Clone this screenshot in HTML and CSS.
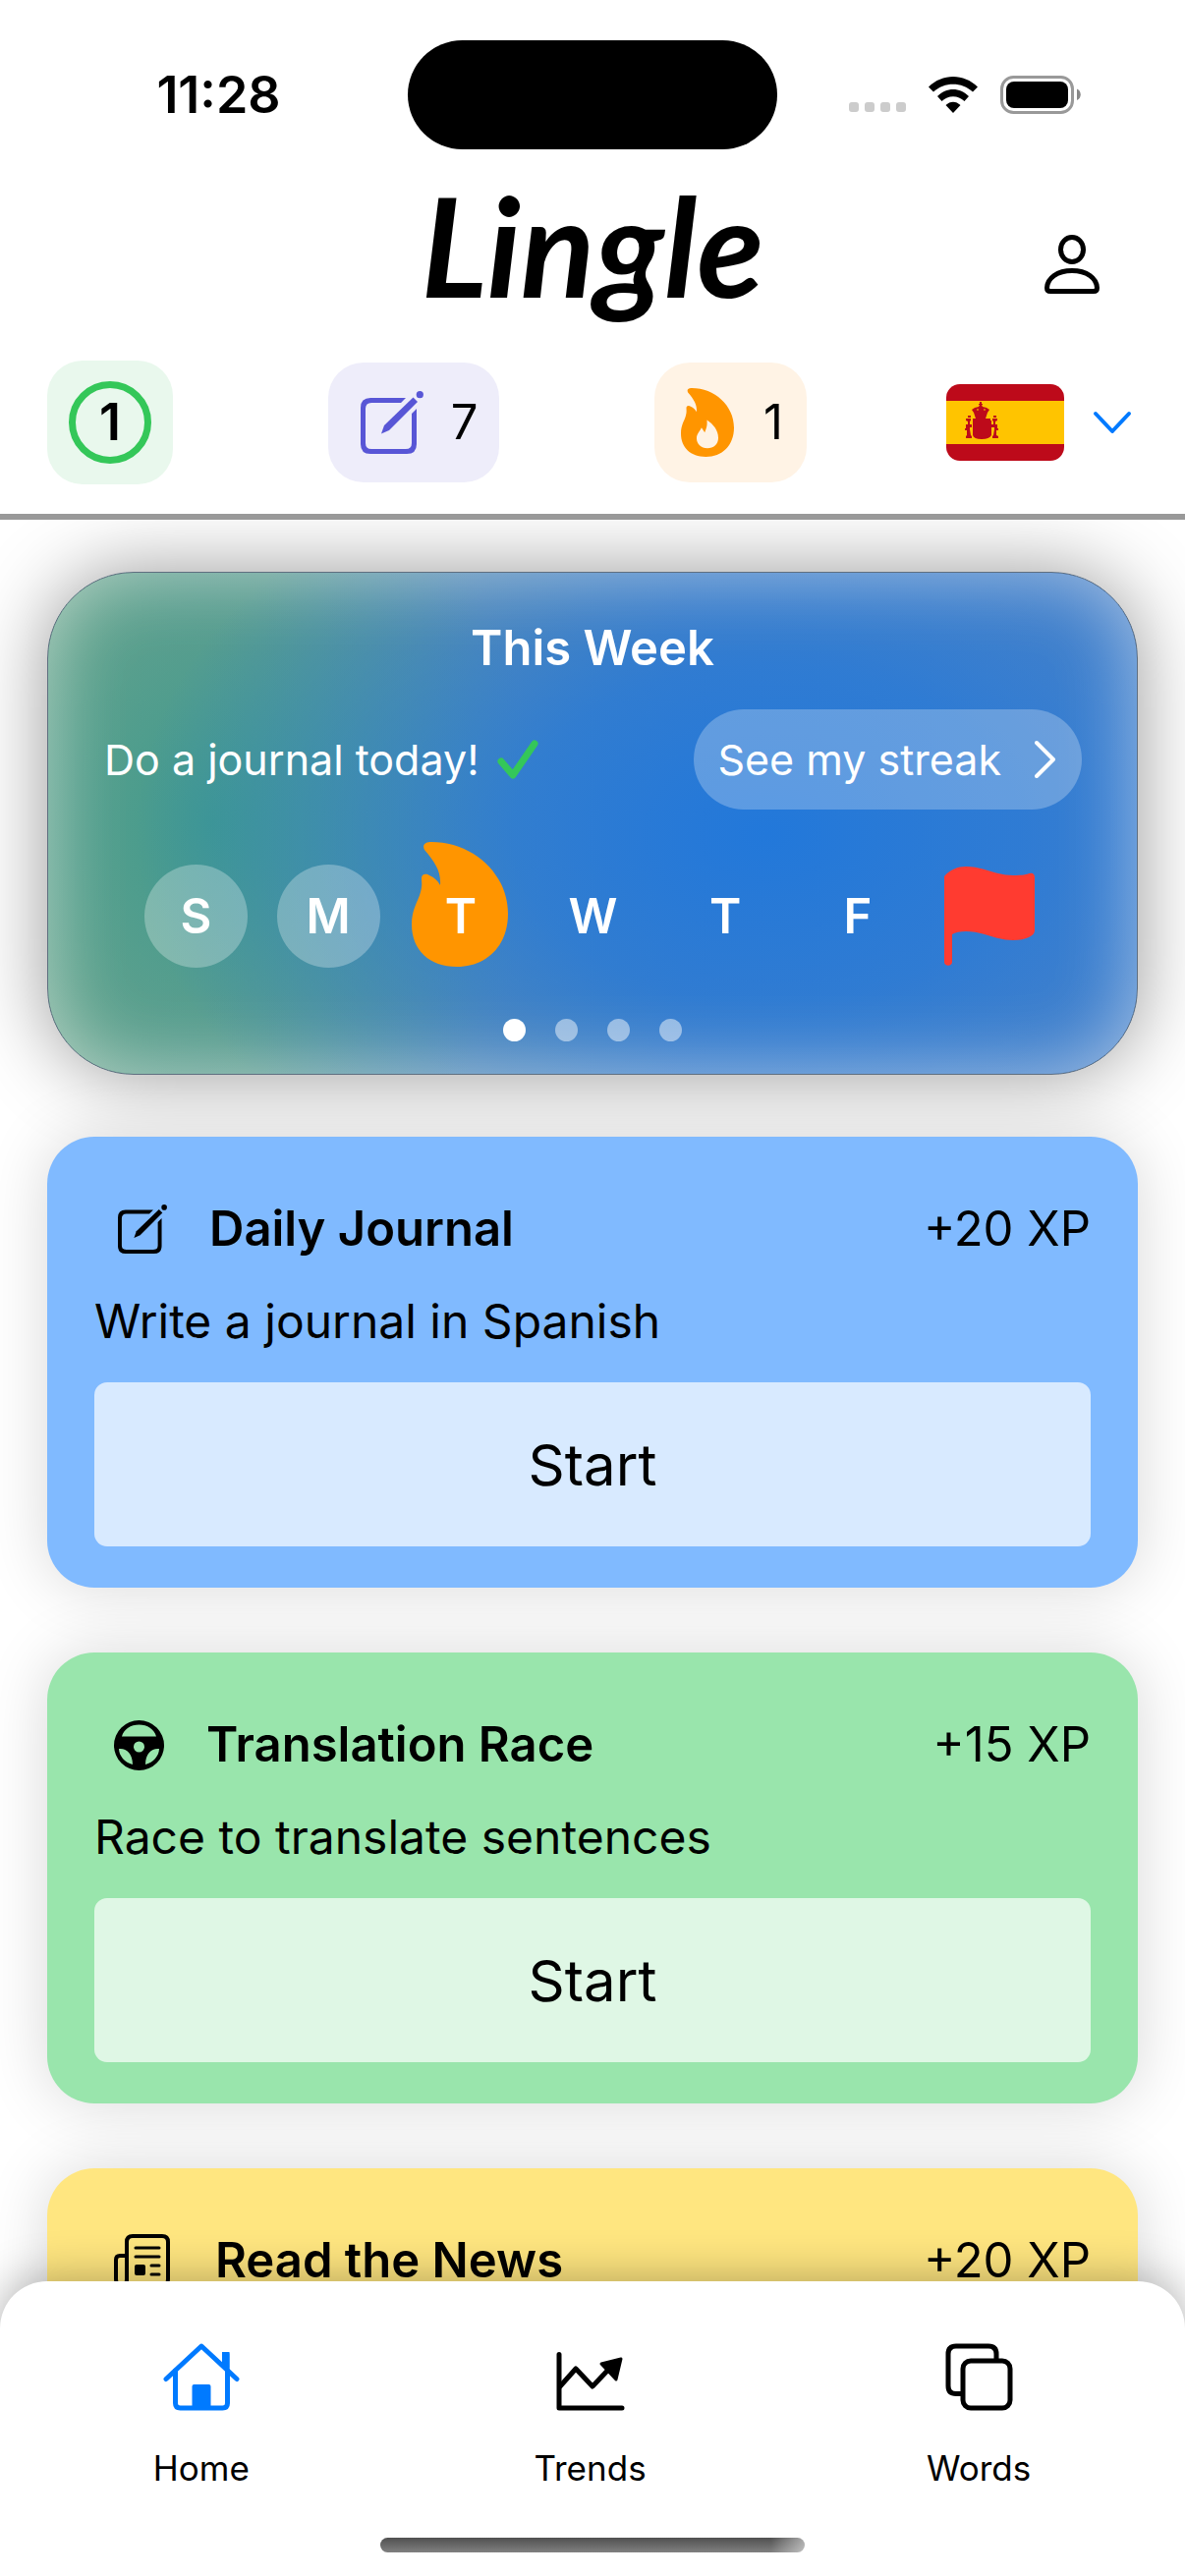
FILE: index.html
```html
<!DOCTYPE html>
<html lang="en">
<head>
<meta charset="utf-8">
<meta name="viewport" content="width=device-width, initial-scale=1">
<title>Lingle</title>
<link rel="stylesheet" href="styles.css">
</head>
<body>
<svg class="sprite" aria-hidden="true">
  <symbol id="compose" viewBox="0 0 64 64">
    <path d="M41 12H11q-6 0-6 6v35q0 6 6 6h35q6 0 6-6V23l5-5V54q0 10-10 10H10Q0 64 0 54V17Q0 7 10 7H46z" fill="currentColor"/>
    <path d="M53.500 6.500l4.500 4.500L29 40l-8 3.500 3-8.500z" fill="currentColor"/>
    <circle cx="60.300" cy="3.700" r="3.600" fill="currentColor"/>
  </symbol>
</svg>

<header class="top">
  <div class="status">
    <time class="status-time">11:28</time>
    <div class="island"></div>
    <div class="status-icons">
      <svg width="58" height="10" viewBox="0 0 58 10" fill="#ccc" class="cell"><rect width="10" height="10" rx="3"/><rect x="16" width="10" height="10" rx="3"/><rect x="32" width="10" height="10" rx="3"/><rect x="48" width="10" height="10" rx="3"/></svg>
      <svg width="50" height="37" viewBox="0 0 50 37"><path d="M0 10.500C14-3.500 36-3.500 50 10.500L45 15.500C34 5 16 5 5 15.500zM9 20C18 10.500 32 10.500 41 20L36.500 25C30 18.500 20 18.500 13.500 25zM17.500 29C22 24.500 28 24.500 32.500 29L25 37z"/></svg>
      <svg width="82" height="39" viewBox="0 0 82 39"><rect x="1.500" y="1.500" width="72" height="36" rx="12" fill="none" stroke="#999" stroke-width="3"/><rect x="6" y="6" width="63" height="27" rx="8"/><path d="M78 13.500c5 2 5 9.500 0 11.500z" fill="#888"/></svg>
    </div>
  </div>
  <div class="brand">
    <h1 class="wordmark">Lingle</h1>
    <button class="profile" aria-label="Profile">
      <svg width="56" height="60" viewBox="0 0 56 60" fill="none" stroke="#000" stroke-width="5"><ellipse cx="28" cy="15" rx="11.500" ry="12.500"/><path d="M2.500 54C3 44 13 36.500 28 36.500S53 44 53.500 54Q53.500 57.500 50 57.500H6Q2.500 57.500 2.500 54z"/></svg>
    </button>
  </div>
  <div class="stats">
    <div class="chips">
      <div class="chip chip-level"><span class="ring">1</span></div>
      <div class="chip chip-journal"><svg width="64" height="64"><use href="#compose"/></svg><span>7</span></div>
      <div class="chip chip-streak">
        <svg width="54" height="70" viewBox="0 0 98 127"><path fill="#ff9500" fill-rule="evenodd" d="M13 8C10 2 15 0 20 0C62 0 98 32 98 73C98 106 76 127 46 127C18 127 0 110 0 84C0 68 6 62 9 51C11 44 10 40 10 37C10 32 15 32 18 34C23 36 26 39 29 44C30 30 24 21 13 8zM48 59C60 67 69 78 69 92C69 104 60 111 49 111C37 111 29 103 29 93C29 84 34 82 38 73L44 82C47 74 49 70 48 59z"/></svg>
        <span>1</span>
      </div>
    </div>
    <button class="language" aria-label="Change language, Spanish">
      <svg class="flag" width="120" height="78" viewBox="0 0 120 78"><path fill="#bd0a1a" d="M0 0h120v78H0z"/><path fill="#ffc400" d="M0 17h120v44H0z"/><g fill="#bd0a1a"><path d="M27 35h18v2h1v15q-2 4-10 4t-9-4zM28 29l-2-3 3-2 4-1 1-2h-1v-1h1v-2h2v2h1v1h-1l1 2 4 1 3 2-2 3-2 6H30z"/><path d="M20 35h5v2l-1 1v3h2v3h-2v2l1 6 1 1v2h-6v-2l1-1v-5h-2v-2h1v-4h2v-3l-2-1zM47 35h5v2l-2 1v3h2v4h1v2h-2v5l2 1v2h-6v-2l1-1 1-6v-2h-3v-3h2v-3l-1-1zM22 32h3v2h-3zM48 32h3v2h-3z"/></g><path d="M31 26h2M38 26h2" stroke="#ffc400" fill="none"/></svg>
      <svg width="40" height="24" viewBox="0 0 40 24" fill="none" stroke="#007aff" stroke-width="4" stroke-linecap="round" stroke-linejoin="round"><path d="M3 3l17 18L37 3"/></svg>
    </button>
  </div>
</header>

<main class="feed">
  <section class="week">
    <h2 class="week-title">This Week</h2>
    <div class="week-row">
      <p class="week-note">Do a journal today! <svg width="42" height="40" viewBox="0 0 42 40" fill="none" stroke="#34c759" stroke-width="7" stroke-linecap="round" stroke-linejoin="round"><path d="M4 22l12 14L38 4"/></svg></p>
      <button class="streak-btn">See my streak <svg width="22" height="40" viewBox="0 0 22 40" fill="none" stroke="#fff" stroke-width="4" stroke-linecap="round" stroke-linejoin="round"><path d="M2 3l17 17L2 37"/></svg></button>
    </div>
    <ul class="days">
      <li class="day day-past">S</li>
      <li class="day day-past">M</li>
      <li class="day"><svg class="flame" width="98" height="127" viewBox="0 0 98 127"><path fill="#ff9500" d="M13 8C10 2 15 0 20 0C62 0 98 32 98 73C98 106 76 127 46 127C18 127 0 110 0 84C0 68 6 62 9 51C11 44 10 40 10 37C10 32 15 32 18 34C23 36 26 39 29 44C30 30 24 21 13 8z"/></svg><span class="day-name">T</span></li>
      <li class="day">W</li>
      <li class="day">T</li>
      <li class="day">F</li>
      <li class="day"><svg width="92" height="101" viewBox="0 0 92 101" role="img" aria-label="Goal"><path fill="#ff3b30" d="M0 10C6 3 14 0 22 0C40 0 52 9 70 9C80 9 84 8 87 7C90 6 92 8 92 11V65C92 68 90 70 86 72C82 74 77 75 70 75C52 75 40 66 22 66C16 66 11 67 8 69V97C8 102 0 102 0 97z"/></svg></li>
    </ul>
    <div class="pager"><i class="dot dot-on"></i><i class="dot"></i><i class="dot"></i><i class="dot"></i></div>
  </section>

  <article class="card card-blue">
    <div class="card-head">
      <svg class="card-icon" width="54" height="50" viewBox="-4 0 54 50"><use href="#compose" width="50" height="50"/></svg>
      <h2 class="card-title">Daily Journal</h2><span class="xp">+20 XP</span>
    </div>
    <p class="card-text">Write a journal in Spanish</p>
    <button class="start">Start</button>
  </article>

  <article class="card card-green">
    <div class="card-head">
      <svg class="card-icon" width="51" height="51" viewBox="0 0 51 51"><path fill-rule="evenodd" d="M25.500 0a25.500 25.500 0 1 0 0 51a25.500 25.500 0 1 0 0-51zM8 16.500C10 9 17 4.500 25.500 4.500S41 9 43 16.500zM5 29C12 28 19 33 19 45C11 43 5 36 5 29zM46 29C39 28 32 33 32 45C40 43 46 36 46 29zM25.500 21.500a5.500 5.500 0 1 0 0 11a5.500 5.500 0 1 0 0-11z"/></svg>
      <h2 class="card-title">Translation Race</h2><span class="xp">+15 XP</span>
    </div>
    <p class="card-text">Race to translate sentences</p>
    <button class="start">Start</button>
  </article>

  <article class="card card-yellow">
    <div class="card-head">
      <svg class="card-icon" width="60" height="54" viewBox="0 0 60 54" fill="none" stroke="#000" stroke-width="4" stroke-linecap="round"><path d="M13 48V8q0-6 6-6h30q6 0 6 6v38q0 6-6 6H8q-6 0-6-6V26q0-4 4-4h7M13 46q0 6-5 6"/><path d="M22 14h24M22 23h24M38 32h8M38 41h8" stroke-width="3"/><rect x="21" y="31" width="11" height="11" rx="2" fill="#000" stroke="none"/></svg>
      <h2 class="card-title">Read the News</h2><span class="xp">+20 XP</span>
    </div>
  </article>
</main>

<nav class="tabs">
  <div class="tab-row">
    <a class="tab" href="#home"><svg width="78" height="70" viewBox="0 0 78 70" fill="none" stroke="#007aff" stroke-width="5" stroke-linecap="round" stroke-linejoin="round"><path d="M3 37.500L39 4l36 33.500"/><path d="M12.500 29V62q0 5 5 5h43q5 0 5-5V29"/><path d="M60 10h7.500v20L60 23z" fill="#007aff" stroke="none"/><path d="M62 12h3.500v14" stroke-width="4"/><rect x="29.500" y="43" width="19" height="24" rx="2" fill="#007aff" stroke="none"/></svg>Home</a>
    <a class="tab" href="#trends"><svg width="70" height="70" viewBox="0 0 70 70" fill="none" stroke="#000" stroke-width="5" stroke-linecap="round" stroke-linejoin="round"><path d="M3 12.500V67h64"/><path d="M4 45l16-18 17 18 18-19"/><path d="M46 22l20-5-5 21z" fill="#000" stroke-width="3"/></svg>Trends</a>
    <a class="tab" href="#words"><svg width="70" height="70" viewBox="0 0 70 70" fill="none" stroke="#000" stroke-width="5"><path d="M17 52.500h-5q-8 0-8-8V12q0-8 8-8h33q8 0 8 8v6"/><rect x="19" y="19" width="48" height="48" rx="8"/></svg>Words</a>
  </div>
  <div class="home-bar"></div>
</nav>
</body>
</html>
```

FILE: styles.css
```css
* { box-sizing: border-box; margin: 0; padding: 0; }
body {
  height: 100vh;
  display: flex;
  flex-direction: column;
  overflow: hidden;
  background: #fff;
  color: #000;
  font-family: Inter, "Liberation Sans", sans-serif;
  font-size: 49px;
  line-height: 60px;
}
button { border: 0; background: none; font: inherit; color: inherit; }
svg { flex: none; display: block; }
.sprite { position: absolute; width: 0; height: 0; }

.top { border-bottom: 6px solid #999; padding-bottom: 30px; }
.status {
  display: grid;
  grid-template-columns: 1fr 376px 1fr;
  align-items: center;
  padding: 41px 30px 25px;
}
.status-time { text-align: center; font-size: 52px; font-weight: 600; }
.island { height: 111px; border-radius: 56px; background: #000; }
.status-icons { display: flex; justify-content: center; align-items: center; gap: 23px; padding-right: 4px; }
.cell { align-self: flex-end; margin-bottom: 2px; }
.brand {
  display: grid;
  grid-template-columns: 1fr auto 1fr;
  align-items: center;
  height: 184px;
  padding: 0 87px;
}
.wordmark {
  grid-column: 2;
  padding-bottom: 40px;
  font-family: Lato, sans-serif;
  font-style: italic;
  font-weight: 700;
  font-size: 140px;
  line-height: 144px;
}
.profile { justify-self: end; }
.stats {
  display: flex;
  justify-content: space-between;
  align-items: center;
  padding: 6px 54px 0 48px;
}
.chips { flex: 0 1 773px; display: flex; justify-content: space-between; align-items: center; }
.chip { display: flex; align-items: center; border-radius: 36px; }
.chip-level { padding: 21px 22px; background: #e9f8ed; }
.ring {
  width: 84px;
  height: 84px;
  border: 7px solid #34c759;
  border-radius: 50%;
  font-size: 52px;
  font-weight: 600;
  line-height: 70px;
  text-align: center;
}
.chip-journal { gap: 28px; height: 122px; padding: 0 22px 0 33px; background: #eeedfa; }
.chip-journal svg { color: #5856d6; }
.chip-streak { gap: 30px; height: 122px; padding: 0 24px 0 27px; background: #fff3e5; }
.language { display: flex; align-items: center; gap: 29px; }
.flag { border-radius: 14px; }

.feed {
  flex: 1;
  min-height: 0;
  overflow: hidden;
  display: flex;
  flex-direction: column;
  gap: 66px;
  padding: 53px 48px 0;
}
.week {
  flex: none;
  margin-bottom: -3px;
  border: 1px solid #5f6f80;
  border-radius: 88px;
  padding: 47px 0 33px;
  color: #fff;
  background:
    radial-gradient(ellipse 58% 84% at 66% 52%, #2278da 0%, #2278dac0 40%, #2278da00 100%),
    radial-gradient(ellipse 30% 80% at 15% 50%, #419a8c 0%, #419a8c00 100%),
    linear-gradient(90deg, #76a98c 0%, #6c9e94 20%, #6490ac 40%, #5a86b8 58%, #5485c4 100%);
  box-shadow: inset 0 0 76px #ffffff80, 0 0 80px #00000068;
}
.week-title { font-size: 49px; font-weight: 600; text-align: center; }
.week-row {
  display: flex;
  justify-content: space-between;
  align-items: center;
  padding: 32px 56px 0 57px;
  font-size: 43px;
}
.week-note { display: flex; align-items: center; gap: 18px; }
.streak-btn {
  display: flex;
  align-items: center;
  gap: 34px;
  height: 102px;
  padding: 0 26px 0 24px;
  border-radius: 51px;
  background: #ffffff42;
}
.days {
  display: flex;
  justify-content: space-between;
  padding: 56px 97px 52px 98px;
  list-style: none;
  font-weight: 600;
}
.day {
  position: relative;
  display: flex;
  align-items: center;
  justify-content: center;
  width: 105px;
  height: 105px;
  border-radius: 50%;
}
.day-past { background: #ffffff48; }
.flame { position: absolute; left: 3px; bottom: 1px; }
.day-name { position: relative; }
.pager { display: flex; justify-content: center; gap: 30px; }
.dot { width: 23px; height: 23px; border-radius: 50%; background: #ffffff78; }
.dot-on { background: #fff; }

.card {
  flex: none;
  padding: 64px 48px 42px;
  border-radius: 48px;
  box-shadow: 0 0 64px #00000028;
}
.card-blue { background: #80baff; }
.card-green { background: #99e5ac; }
.card-yellow { min-height: 458px; background: #ffe680; }
.card-head { display: flex; align-items: center; height: 60px; padding-left: 20px; }
.card-title { margin-left: 43px; font-size: 49px; font-weight: 600; }
.xp { margin-left: auto; }
.card-text { padding-top: 34px; font-size: 48px; }
.start {
  display: block;
  width: 100%;
  height: 167px;
  margin-top: 32px;
  border-radius: 13px;
  background: #ffffffb0;
  font-size: 58px;
}

.tabs {
  position: relative;
  margin-top: -48px;
  padding: 62px 0 24px;
  border-radius: 48px 48px 0 0;
  background: #fff;
  box-shadow: 0 0 50px #00000055;
}
.tab-row { display: flex; padding: 0 12px 0 7px; }
.tab {
  flex: 1;
  display: flex;
  flex-direction: column;
  align-items: center;
  gap: 36px;
  color: #000;
  font-size: 35px;
  line-height: 44px;
  text-decoration: none;
}
.home-bar {
  width: 432px;
  height: 15px;
  margin: 49px auto 0;
  border-radius: 8px;
  background: linear-gradient(90deg, #fff0 92%, #ffffff80), linear-gradient(#505050, #808080);
}
```
